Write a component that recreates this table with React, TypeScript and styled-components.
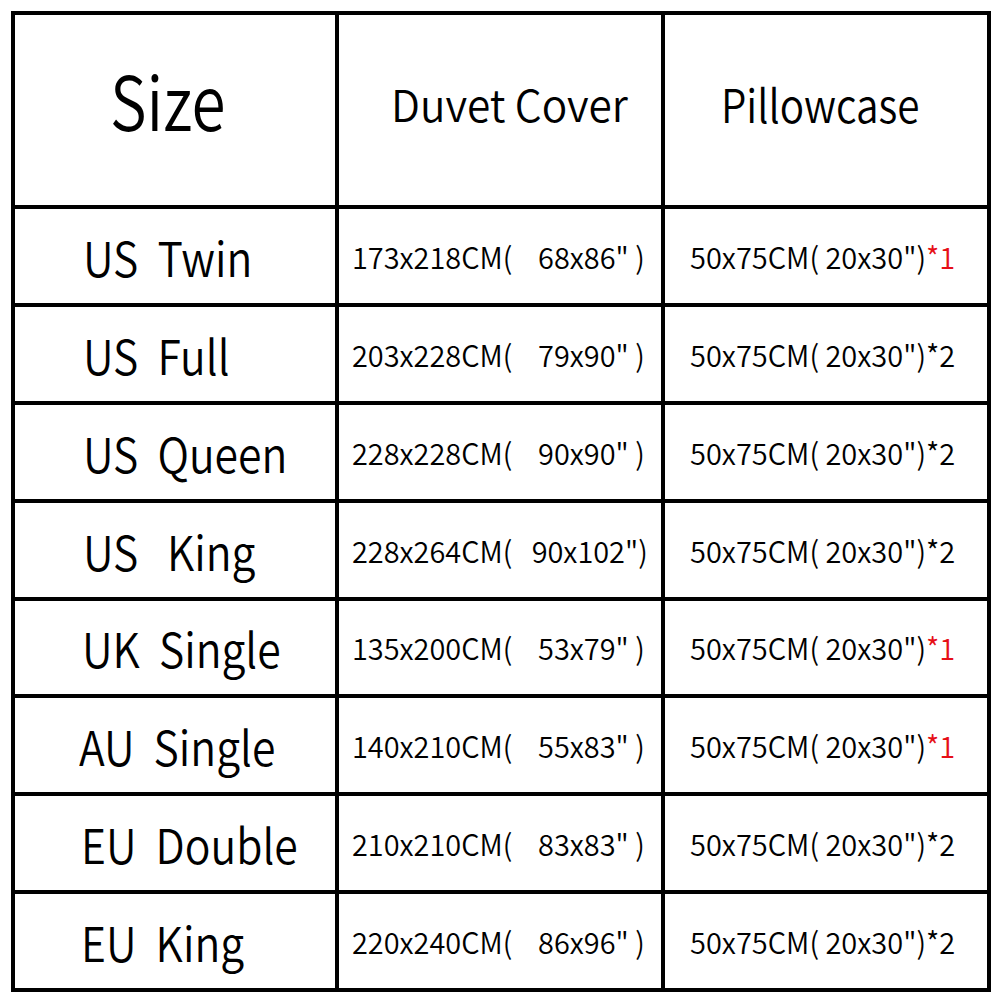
import React from 'react'
import styled, { createGlobalStyle } from 'styled-components'

const GlobalStyle = createGlobalStyle`
  body {
    margin: 0;
    background: #fff;
    font-family: "Noto Sans CJK SC", "Noto Sans", sans-serif;
    color: #000;
  }
`

const Sheet = styled.div`
  width: 1000px;
  height: 1000px;
  padding: 11px;
  box-sizing: border-box;
`

const Grid = styled.div`
  display: grid;
  grid-template-columns: 320px 322px 322px;
  grid-template-rows: 190px repeat(8, 1fr);
  gap: 4px;
  padding: 4px;
  background: #000;
  width: 980px;
  height: 981px;
  box-sizing: border-box;
`

const Cell = styled.div<{ $pad?: number; $size?: number; $lift?: number }>`
  background: #fff;
  display: flex;
  align-items: center;
  padding-left: ${p => p.$pad ?? 0}px;
  padding-bottom: ${p => p.$lift ?? 0}px;
  font-size: ${p => p.$size ?? 30}px;
  font-weight: 350;
  white-space: pre;
  line-height: 1;
  overflow: hidden;
`

// the sheet's lettering is narrower than the installed font
const Squeeze = styled.span<{ $k: number }>`
  display: inline-block;
  transform: scaleX(${p => p.$k});
  transform-origin: left center;
`

const Red = styled.span`
  color: #e60f17;
`

type Row = {
  label: string
  pad: number
  duvet: string
  count: number
}

const rows: Row[] = [
  { label: 'US  Twin', pad: 68, duvet: '173x218CM(    68x86" )', count: 1 },
  { label: 'US  Full', pad: 68, duvet: '203x228CM(    79x90" )', count: 2 },
  { label: 'US  Queen', pad: 68, duvet: '228x228CM(    90x90" )', count: 2 },
  { label: 'US   King', pad: 68, duvet: '228x264CM(   90x102")', count: 2 },
  { label: 'UK  Single', pad: 67, duvet: '135x200CM(    53x79" )', count: 1 },
  { label: 'AU  Single', pad: 64, duvet: '140x210CM(    55x83" )', count: 1 },
  { label: 'EU  Double', pad: 66, duvet: '210x210CM(    83x83" )', count: 2 },
  { label: 'EU  King', pad: 66, duvet: '220x240CM(    86x96" )', count: 2 }
]

export default function App() {
  return (
    <Sheet>
      <GlobalStyle />
      <Grid>
        <Cell $pad={95} $size={75} $lift={24}>
          <Squeeze $k={0.825}>Size</Squeeze>
        </Cell>
        <Cell $pad={52} $size={44} $lift={14}>
          <Squeeze $k={0.963}>Duvet Cover</Squeeze>
        </Cell>
        <Cell $pad={56} $size={46} $lift={14}>
          <Squeeze $k={0.88}>Pillowcase</Squeeze>
        </Cell>
        {rows.map(r => (
          <React.Fragment key={r.label}>
            <Cell $pad={r.pad} $size={48}>
              <Squeeze $k={0.89}>{r.label}</Squeeze>
            </Cell>
            <Cell $pad={13} $size={30}>
              <Squeeze $k={0.963}>{r.duvet}</Squeeze>
            </Cell>
            <Cell $pad={25} $size={30}>
              <Squeeze $k={0.966}>
                50x75CM( 20x30")
                {r.count === 1 ? <Red>*1</Red> : '*2'}
              </Squeeze>
            </Cell>
          </React.Fragment>
        ))}
      </Grid>
    </Sheet>
  )
}
